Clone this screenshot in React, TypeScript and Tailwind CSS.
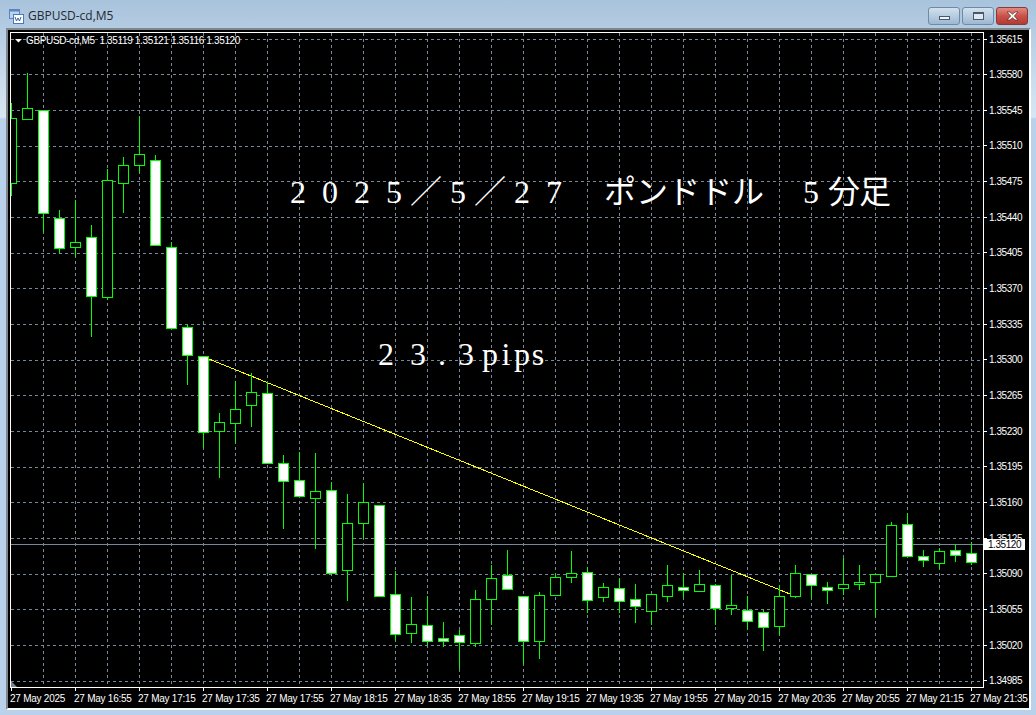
import React from "react";

// wickTop, bodyTop, bodyBottom, wickBottom, white body (bear) = 1
const candles: number[][] = [
  [103, 118, 183, 196, 0], [73, 108, 119, 119, 0], [110, 110, 213, 232, 1], [210, 218, 248, 254, 1],
  [200, 242, 247, 257, 0], [225, 237, 296, 337, 1], [169, 180, 297, 300, 0], [157, 165, 183, 213, 0],
  [116, 154, 165, 173, 0], [155, 160, 245, 245, 1], [242, 247, 328, 328, 1], [325, 327, 355, 385, 1],
  [356, 356, 432, 448, 1], [413, 422, 431, 478, 0], [381, 409, 423, 443, 0], [373, 392, 405, 427, 0],
  [382, 393, 463, 463, 1], [455, 463, 481, 529, 1], [452, 480, 496, 496, 1], [453, 491, 498, 549, 0],
  [482, 490, 573, 575, 1], [494, 523, 570, 601, 0], [483, 502, 523, 539, 0], [505, 505, 596, 596, 1],
  [571, 594, 634, 641, 1], [597, 624, 633, 643, 0], [596, 625, 641, 645, 1], [622, 638, 641, 647, 1],
  [630, 635, 642, 669, 1], [590, 599, 643, 647, 0], [565, 578, 599, 625, 0], [550, 575, 589, 589, 1],
  [596, 596, 641, 664, 1], [592, 595, 641, 659, 0], [573, 577, 595, 595, 0], [551, 573, 577, 583, 0],
  [567, 572, 600, 613, 1], [583, 587, 597, 602, 0], [578, 588, 601, 613, 1], [584, 599, 606, 623, 1],
  [594, 594, 611, 625, 0], [565, 585, 596, 602, 0], [573, 587, 590, 598, 1], [570, 584, 591, 591, 0],
  [584, 585, 608, 625, 1], [575, 605, 608, 615, 0], [596, 610, 621, 629, 1], [610, 612, 627, 651, 1],
  [585, 596, 626, 635, 0], [565, 573, 596, 598, 0], [574, 574, 585, 599, 1], [582, 587, 590, 604, 1],
  [558, 584, 588, 595, 0], [565, 582, 584, 590, 0], [574, 574, 582, 617, 0], [522, 525, 576, 577, 0],
  [513, 524, 556, 556, 1], [550, 556, 560, 567, 1], [548, 551, 563, 569, 0], [544, 550, 555, 562, 1],
  [542, 553, 562, 565, 1],
];

const prices = Array.from({ length: 19 }, (_, i) => ((135615 - 35 * i) / 100000).toFixed(5));
const gridY = prices.map((_, i) => Math.floor(39 + 35.67 * i) + 0.5);
const gridX = Array.from({ length: 30 }, (_, i) => 43.5 + 32 * i);
const times = ["27 May 2025", "27 May 16:55", "27 May 17:15", "27 May 17:35", "27 May 17:55", "27 May 18:15", "27 May 18:35", "27 May 18:55",
  "27 May 19:15", "27 May 19:35", "27 May 19:55", "27 May 20:15", "27 May 20:35", "27 May 20:55", "27 May 21:15", "27 May 21:35"];

const headline: [string, string][] = [
  ["2", "w-8"], ["0", "w-8"], ["2", "w-8"], ["5", "w-8"], ["\uFF0F", "w-8"], ["5", "w-8"], ["\uFF0F", "w-8"], ["2", "w-8"], ["7", "w-8"],
  ["\u00a0", "w-[34px]"], ["ポ", "w-8"], ["ン", "w-8"], ["ド", "w-8"], ["ド", "w-8"], ["ル", "w-8"],
  ["\u00a0", "w-[30px]"], ["5", "w-[34px]"], ["分", "w-[31px]"], ["足", "w-8"],
];
const pipsLabel: [string, string][] = [
  ["2", "w-8"], ["3", "w-8"], [".", "w-4"], ["3", "w-8"], ["p", "w-4"], ["i", "w-4"], ["p", "w-4"], ["s", "w-4"],
];

function CellText({ cells }: { cells: [string, string][] }) {
  return (
    <>
      {cells.map(([c, w], i) => (
        <span key={i} className={`inline-block text-center ${w}`}>{c}</span>
      ))}
    </>
  );
}

function Plot() {
  return (
    <svg className="block w-[972px] h-[654px]" viewBox="11 33 972 654">
      <g stroke="#778899" strokeDasharray="3 3" shapeRendering="crispEdges">
        {gridY.map((y) => <line key={y} x1="11" x2="983" y1={y} y2={y} />)}
        {gridX.map((x) => <line key={x} x1={x} x2={x} y1="33" y2="687" />)}
        <line x1="11" x2="983" y1="544.5" y2="544.5" strokeDasharray="none" />
      </g>
      <line x1="204" y1="357" x2="790" y2="594" stroke="#ffff00" shapeRendering="crispEdges" />
      <g stroke="#00ff00" shapeRendering="crispEdges">
        {candles.map(([wt, bt, bb, wb, white], k) => {
          const x = 11.5 + 16 * k;
          return (
            <g key={k}>
              <line x1={x} x2={x} y1={wt} y2={bt} />
              <line x1={x} x2={x} y1={bb} y2={wb} />
              <rect x={x - 5} y={bt + 0.5} width="10" height={bb - bt} fill={white ? "#ffffff" : "#000000"} />
            </g>
          );
        })}
      </g>
      <polygon points="15,39 22,39 18.5,42.5" fill="#ffffff" />
      <polygon points="11,681 17,687 11,687" fill="#778899" />
    </svg>
  );
}

export default function App() {
  return (
    <div className="w-[1036px] h-[715px] flex flex-col overflow-hidden bg-[linear-gradient(180deg,#a8c3dc_0,#c2d6e9_60px,#d8e6f3_117px,#b9d1ea_119px,#b9d1ea_100%)] font-['Liberation_Sans',sans-serif]">
      {/* TITLE BAR */}
      <div className="h-[28px] pt-1 pl-[9px] pr-2 flex items-center">
        <svg width="15" height="15" viewBox="0 0 15 15" className="mr-1">
          <rect x="0.5" y="0.5" width="10" height="9" fill="#b9d2f0" stroke="#5a86c0" />
          <rect x="0.5" y="0.5" width="10" height="2" fill="#5a86c0" />
          <rect x="4.5" y="5.5" width="10" height="9" fill="#ffffff" stroke="#4a78b8" />
          <path d="M6 8l1.500 4 1.500-3 1.500 3 1.500-4" fill="none" stroke="#2f62ae" />
        </svg>
        <span className="text-xs text-[#222a33] font-['Open_Sans',sans-serif]">GBPUSD-cd,M5</span>
        <div className="ml-auto flex gap-0.5">
          <div className="w-8 h-[18px] rounded-[3px] border border-[#6f8aa5] bg-gradient-to-b from-[#d3e1ee] to-[#9db8d2] flex items-center justify-center">
            <div className="w-[11px] h-1 mt-1 bg-[#eef3f8] border border-[#47586b]" />
          </div>
          <div className="w-8 h-[18px] rounded-[3px] border border-[#6f8aa5] bg-gradient-to-b from-[#d3e1ee] to-[#9db8d2] flex items-center justify-center">
            <div className="w-[11px] h-2 bg-[#dfe8f1] border border-t-2 border-[#47586b]" />
          </div>
          <div className="w-8 h-[18px] rounded-[3px] border border-[#8a3a36] bg-gradient-to-b from-[#e08a80] via-[#c9514a] to-[#b23c34] flex items-center justify-center">
            <svg width="13" height="10" viewBox="0 0 13 10">
              <path d="M1 1h3l2.500 2.200L9 1h3L8.300 5 12 9H9L6.500 6.800 4 9H1l3.700-4z" fill="#f4f4f4" stroke="#5b2a28" strokeWidth="0.7" />
            </svg>
          </div>
        </div>
      </div>

      {/* CHART WINDOW */}
      <div className="ml-1.5 mr-[5px] h-[682px] border-2 border-t-[#80868c] border-l-[#80868c] border-r-white border-b-white">
        <div className="h-full bg-black pt-0.5 pl-0.5 flex flex-col overflow-hidden text-[10px] leading-3 text-white">
          <div className="flex tracking-[-0.45px]">
            <div className="relative w-[974px] h-[656px] border border-white shrink-0">
              <Plot />
              <div className="absolute left-[15px] top-0.5 whitespace-pre tracking-[-0.35px]">GBPUSD-cd,M5  1.35119 1.35121 1.35116 1.35120</div>
              <div className="absolute left-[271px] top-[141px] flex text-[32px] leading-9 tracking-normal font-['Liberation_Serif','Noto_Sans_CJK_JP',serif]">
                <CellText cells={headline} />
              </div>
              <div className="absolute left-[359px] top-[303px] flex text-[32px] leading-9 tracking-normal font-['Liberation_Serif','Noto_Sans_CJK_JP',serif]">
                <CellText cells={pipsLabel} />
              </div>
            </div>

            {/* PRICE AXIS */}
            <div className="relative flex-1 mt-px h-[654px] flex flex-col justify-between">
              {prices.map((p) => (
                <div key={p} className="h-3 flex items-center">
                  <div className="w-[3px] h-px bg-white mr-[2px]" />
                  <span className="pt-px">{p}</span>
                </div>
              ))}
              <div className="absolute left-0 top-[506px] w-[41px] h-[11px] bg-white text-black pl-1 pt-px flex items-center">1.35120</div>
            </div>
          </div>

          {/* TIME AXIS */}
          <div className="flex tracking-[-0.25px]">
            {times.map((t) => (
              <div key={t} className="w-16 shrink-0 whitespace-nowrap">
                <div className="ml-px w-px h-[3px] bg-white" />
                <div className="mt-[2px]">{t}</div>
              </div>
            ))}
          </div>
        </div>
      </div>
    </div>
  );
}
